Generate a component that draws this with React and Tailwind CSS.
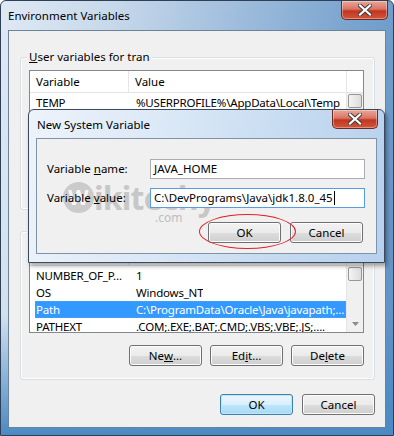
import React from "react";

const font = { fontFamily: '"Noto Sans", "Open Sans", sans-serif' };

function Btn({ children, def, className = "" }) {
  return (
    <div
      className={
        "w-[73px] h-[21px] rounded-[3px] border flex items-center justify-center text-[11.5px] text-black " +
        (def
          ? "border-[#3c7fb1] bg-[linear-gradient(to_bottom,#eaf6fd_0%,#d9f0fc_50%,#bee6fd_51%,#a7d9f5_100%)] shadow-[inset_0_0_0_1px_#c4e5f6]"
          : "border-[#707070] bg-[linear-gradient(to_bottom,#f2f2f2_0%,#ebebeb_50%,#dddddd_51%,#cfcfcf_100%)] shadow-[inset_0_0_0_1px_#fcfcfc] ") +
        " " +
        className
      }
    >
      {children}
    </div>
  );
}

function CloseBtn({ className = "" }) {
  return (
    <div
      className={
        "rounded-b-[5px] border border-[#6b2a24] border-t-0 bg-[linear-gradient(to_bottom,#eba797_0%,#d97565_45%,#c23620_55%,#d2553a_100%)] flex items-center justify-center shadow-[inset_0_0_0_1px_rgba(255,255,255,0.35)] " +
        className
      }
    >
      <svg width="14" height="12" viewBox="0 0 14 12">
        <path
          d="M2 1.5 L12 10.5 M12 1.5 L2 10.5"
          stroke="#3a3a3a"
          strokeWidth="4"
          strokeLinecap="square"
        />
        <path
          d="M2 1.5 L12 10.5 M12 1.5 L2 10.5"
          stroke="#ffffff"
          strokeWidth="2.2"
          strokeLinecap="square"
        />
      </svg>
    </div>
  );
}

function ListView({ rows }) {
  return (
    <div className="w-[335px] h-[90px] border border-[#828790] bg-white flex overflow-hidden">
      <div className="flex-1 flex flex-col min-w-0">
        <div className="h-[22px] shrink-0 flex border-b border-[#e5e5e5] text-[11.5px] text-black">
          <div className="w-[99px] pl-[6px] flex items-center border-r border-[#e5e5e5]">
            Variable
          </div>
          <div className="flex-1 pl-[6px] flex items-center">Value</div>
        </div>
        <div className="flex flex-col pt-[1px]">
          {rows.map((r, i) => (
            <div
              key={i}
              className={
                "h-[17px] ml-[5px] flex text-[11.5px] leading-[17px] tracking-[-0.2px] whitespace-nowrap " +
                (r.sel
                  ? "bg-[#3399ff] text-white outline-1 outline-dotted outline-[#c88a3c] -outline-offset-1"
                  : "text-black")
              }
            >
              <div className="w-[95px] pl-[1px] shrink-0">{r.n}</div>
              <div className="pl-[6px] overflow-hidden">{r.v}</div>
            </div>
          ))}
        </div>
      </div>
      <div className="w-[17px] shrink-0 flex flex-col border-l border-[#e5e5e5] bg-[#f0f0f0]">
        <div className="h-[22px] border-b border-[#e5e5e5] bg-white" />
        <div className="mx-[1px] mt-[1px] h-[14px] rounded-[2px] border border-[#979797] bg-[linear-gradient(to_right,#f4f4f4,#dcdcdc)]" />
        <div className="flex-1" />
        <div className="h-[16px] flex items-center justify-center">
          <svg width="7" height="4" viewBox="0 0 7 4">
            <path d="M0 0 L7 0 L3.5 4 Z" fill="#8a8a8a" />
          </svg>
        </div>
      </div>
    </div>
  );
}

function GroupBox({ label, className = "", children }) {
  return (
    <div
      className={
        "relative border border-[#d5dfe5] rounded-[3px] shadow-[inset_0_0_0_1px_#ffffff] " +
        className
      }
    >
      {label && (
        <div className="absolute left-[6px] -top-[8px] px-[2px] bg-[#f0f0f0] text-[11.5px] leading-[14px] text-black">
          {label}
        </div>
      )}
      {children}
    </div>
  );
}

export default function App() {
  const userRows = [
    { n: "TEMP", v: "%USERPROFILE%\\AppData\\Local\\Temp" },
    { n: "TMP", v: "%USERPROFILE%\\AppData\\Local\\Temp" },
    { n: "", v: "" },
  ];
  const sysRows = [
    { n: "NUMBER_OF_P…", v: "1" },
    { n: "OS", v: "Windows_NT" },
    { n: "Path", v: "C:\\ProgramData\\Oracle\\Java\\javapath;…", sel: true },
    { n: "PATHEXT", v: ".COM;.EXE;.BAT;.CMD;.VBS;.VBE;.JS;…." },
  ];

  return (
    <div
      style={font}
      className="relative w-[394px] h-[436px] overflow-hidden flex flex-col border border-[#2f3f55] rounded-t-[6px] bg-[linear-gradient(100deg,#dfe9f4_0%,#c6d8ea_25%,#a0bedd_50%,#7ba5cf_75%,#5c8fc4_100%)]"
    >
      <div className="absolute inset-x-0 bottom-0 h-[120px] bg-[linear-gradient(to_bottom,rgba(80,140,200,0)_0%,#4a8ac4_100%)]" />
      {/* title bar */}
      <div className="relative h-[29px] shrink-0 flex justify-between items-start">
        <div className="pl-[7px] pt-[6px] text-[11.5px] text-black">
          Environment Variables
        </div>
        <CloseBtn className="w-[47px] h-[19px] mr-[5px]" />
      </div>

      {/* client */}
      <div className="relative mx-[7px] mb-[7px] flex-1 border border-[#6d8297] bg-[#f0f0f0] flex flex-col pl-[11px] pr-[10px]">
        <GroupBox
          label={
            <span>
              <u>U</u>ser variables for tran
            </span>
          }
          className="mt-[26px] h-[153px] pl-[8px] pt-[12px]"
        >
          <ListView rows={userRows} />
          <div className="flex justify-end gap-[8px] mt-[12px] pr-[10px]">
            <Btn>New…</Btn>
            <Btn>Edit…</Btn>
            <Btn>Delete</Btn>
          </div>
        </GroupBox>

        <GroupBox
          label={
            <span>
              S<u>y</u>stem variables
            </span>
          }
          className="mt-[21px] h-[149px] pl-[8px] pt-[11px]"
        >
          <ListView rows={sysRows} />
          <div className="flex justify-end gap-[8px] mt-[12px] pr-[10px]">
            <Btn>
              Ne<u>w</u>…
            </Btn>
            <Btn>
              Ed<u>i</u>t…
            </Btn>
            <Btn>
              De<u>l</u>ete
            </Btn>
          </div>
        </GroupBox>

        <div className="flex justify-end gap-[9px] mt-[14px]">
          <Btn def>OK</Btn>
          <Btn>Cancel</Btn>
        </div>
      </div>

      {/* New System Variable dialog (overlay) */}
      <div className="absolute left-[27px] top-[108px] w-[357px] h-[154px] rounded-t-[6px] border border-[#3b4a5c] bg-[linear-gradient(100deg,#edf3fa_0%,#d9e7f6_40%,#c6dbf1_70%,#b6d1ee_100%)] shadow-[2px_3px_4px_rgba(0,0,0,0.35)] flex flex-col">
        <div className="h-[28px] shrink-0 flex justify-between items-start">
          <div className="pl-[8px] pt-[6px] text-[11.5px] text-black">
            New System Variable
          </div>
          <CloseBtn className="w-[46px] h-[19px] mr-[6px]" />
        </div>
        <div className="relative mx-[7px] mb-[8px] flex-1 border border-[#7f93a8] bg-[#f0f0f0] flex flex-col pl-[10px] pr-[11px]">
          {/* watermark */}
          <div className="absolute left-[26px] top-[43px] flex items-center opacity-50 pointer-events-none">
            <div className="w-[31px] h-[31px] rounded-full bg-[#a8a8a8] flex items-center justify-center text-white font-bold text-[21px] leading-none">
              W
            </div>
            <div className="text-[#a0a0a0] font-bold text-[32px] leading-[31px] tracking-tight">
              ikitechy
            </div>
          </div>
          <div className="absolute left-[118px] top-[73px] text-[#a8a8a8] opacity-70 text-[12px] leading-none pointer-events-none">
            .com
          </div>

          <div className="relative flex items-center mt-[20px]">
            <div className="w-[103px] text-[11.5px] text-black">
              Variable <u>n</u>ame:
            </div>
            <div className="flex-1 h-[20px] border border-[#abadb3] bg-white flex items-center pl-[3px] text-[11.5px] text-black">
              JAVA_HOME
            </div>
          </div>
          <div className="relative flex items-center mt-[9px]">
            <div className="w-[103px] text-[11.5px] text-black">
              Variable <u>v</u>alue:
            </div>
            <div className="flex-1 h-[20px] border border-[#569de5] bg-white flex items-center pl-[3px] text-[11.5px] text-black">
              C:\DevPrograms\Java\jdk1.8.0_45
              <span className="inline-block w-[1px] h-[14px] bg-black ml-[1px]" />
            </div>
          </div>
          <div className="relative flex justify-end gap-[9px] mt-[14px] pr-[2px]">
            <Btn>OK</Btn>
            <Btn>Cancel</Btn>
          </div>
        </div>
      </div>

      {/* red highlight ellipse */}
      <div className="absolute left-[198px] top-[213px] w-[97px] h-[35px] rounded-[50%] border border-[#e0202a] pointer-events-none" />
    </div>
  );
}
